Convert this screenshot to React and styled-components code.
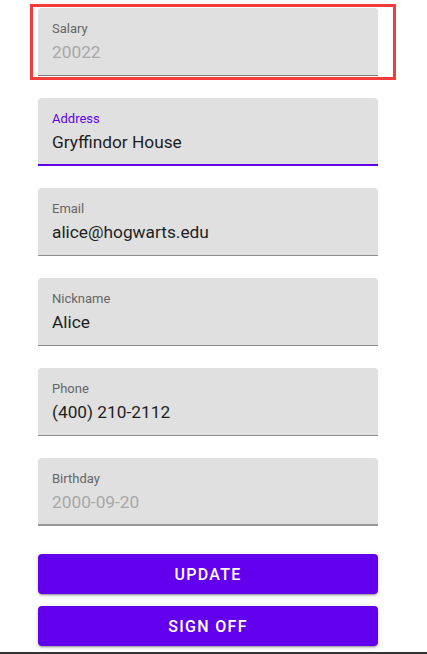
import styled, { createGlobalStyle } from "styled-components";

const GlobalStyle = createGlobalStyle`
  html, body {
    margin: 0;
    padding: 0;
    background: #fff;
    font-family: Roboto, "Liberation Sans", sans-serif;
  }
`;

const fields = [
  { label: "Address", value: "Gryffindor House", variant: "focused" },
  { label: "Email", value: "alice@hogwarts.edu" },
  { label: "Nickname", value: "Alice" },
  { label: "Phone", value: "(400) 210-2112" },
  { label: "Birthday", value: "2000-09-20", variant: "disabled" },
];

const underlines = {
  focused: "2px solid #6200ee",
  disabled: "2px solid #999",
  readonly: "1px solid #7a7a7a",
  normal: "1px solid #8c8c8c",
};

const Field = ({ label, value, variant = "normal" }) => (
  <FieldBox $variant={variant}>
    <Label $focused={variant === "focused"}>{label}</Label>
    <Value $muted={variant === "disabled" || variant === "readonly"}>
      {value}
    </Value>
  </FieldBox>
);

const App = () => {
  return (
    <Page>
      <GlobalStyle />
      <Form>
        <Highlight>
          <Field label="Salary" value="20022" variant="readonly" />
        </Highlight>
        {fields.map((f) => (
          <Field key={f.label} {...f} />
        ))}
        <Actions>
          <Button>Update</Button>
          <Button>Sign off</Button>
        </Actions>
      </Form>
    </Page>
  );
};

export default App;

const Page = styled.div`
  min-height: 100vh;
  box-sizing: border-box;
  border-bottom: 2px solid #333;
`;

const Form = styled.div`
  width: 340px;
  padding: 8px 0 0 38px;
  display: flex;
  flex-direction: column;
  gap: 22px;
`;

const Highlight = styled.div`
  margin: -1px -15px -1px -5px;
  padding: 1px 15px 1px 5px;
  outline: 3px solid #f53b3b;
`;

const FieldBox = styled.div`
  height: 68px;
  box-sizing: border-box;
  padding: 13px 14px 0;
  background: #e0e0e0;
  border-radius: 4px 4px 0 0;
  border-bottom: ${(p) => underlines[p.$variant]};
  display: flex;
  flex-direction: column;
  gap: 3px;
`;

const Label = styled.div`
  font-size: 13px;
  line-height: 16px;
  color: ${(p) => (p.$focused ? "#6200ee" : "#666")};
`;

const Value = styled.div`
  font-size: 17.3px;
  line-height: 24px;
  color: ${(p) => (p.$muted ? "#a8a8a8" : "#1f1f1f")};
`;

const Actions = styled.div`
  margin-top: 6px;
  display: flex;
  flex-direction: column;
  gap: 12px;
`;

const Button = styled.button`
  height: 40px;
  border: none;
  border-radius: 4px;
  background: #6200ee;
  color: #fff;
  font-family: Roboto, "Liberation Sans", sans-serif;
  font-size: 16px;
  font-weight: 500;
  letter-spacing: 1.3px;
  text-transform: uppercase;
  box-shadow: 0 3px 1px -2px rgba(0, 0, 0, 0.2), 0 2px 2px 0 rgba(0, 0, 0, 0.14),
    0 1px 5px 0 rgba(0, 0, 0, 0.12);
  cursor: pointer;
`;
